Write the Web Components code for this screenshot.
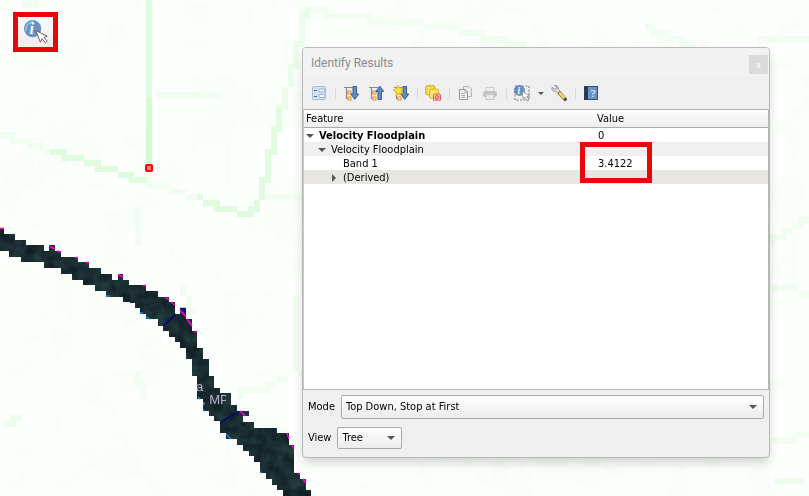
<!DOCTYPE html>
<html lang="en">
<head>
<meta charset="utf-8">
<title>Identify Results</title>
<style>
html,body{height:100%;margin:0}
body{font:11px/14px "DejaVu Sans Condensed","Noto Sans",sans-serif;color:#000;overflow:hidden}
</style>
</head>
<body>
<map-desktop>
  <flood-map slot="map"></flood-map>
  <identify-tool slot="tool"></identify-tool>
  <identify-panel slot="panel" heading="Identify Results">
    <panel-toolbar slot="toolbar"></panel-toolbar>
    <result-tree></result-tree>
    <choice-field slot="options" label="Mode" options="Top Down, Stop at First|Current Layer|Top Down|Layer Selection" wide></choice-field>
    <choice-field slot="options" label="View" options="Tree|Table|Graph"></choice-field>
  </identify-panel>
</map-desktop>
<script>
const define = (name, html, setup) => customElements.define(name, class extends HTMLElement {
  constructor() {
    super();
    this.attachShadow({mode: 'open'});
  }
  connectedCallback() {
    this.shadowRoot.innerHTML = typeof html === 'function' ? html(this) : html;
    if (setup) setup(this, this.shadowRoot);
  }
});

const tree = `<path d="M1 2.5H10M3.5 2V13.5H7M3.5 7.5H7" fill="none" stroke="#8a8a8a" stroke-width="1.2"/><rect x="5" y="6" width="3" height="3" fill="#fff3d8" stroke="#f08a1c"/><rect x="5" y="12" width="3" height="3" fill="#fff3d8" stroke="#f08a1c"/>`;
const down = `<path d="M10 1.5H13.5V9H15.8L11.8 14.4L7.8 9H10Z" fill="#5f8dc4" stroke="#2f5580" stroke-width=".9"/>`;
const info = `<circle cx="5.5" cy="5.5" r="5" fill="#6590c8" stroke="#4a77b0" stroke-width=".6"/><text x="3.6" y="9" font-family="Liberation Serif,serif" font-weight="bold" font-style="italic" font-size="10" fill="#fff">i</text>`;
const icons = {
  form: `<rect x="1.5" y="1.5" width="13" height="13" rx="1" fill="#d3e2f3" stroke="#a4bcd8"/><path d="M3 5.500H6M3 11.500H6" stroke="#4d6c93"/><rect x="8" y="4" width="5.500" height="3" rx="1" fill="#fff" stroke="#93add0"/><rect x="8" y="9.500" width="5.500" height="3" rx="1" fill="#fff" stroke="#93add0"/>`,
  expand: tree + down,
  collapse: tree + `<path d="M10 14.4H13.5V6.5H15.8L11.8 1.2L7.8 6.5H10Z" fill="#5f8dc4" stroke="#2f5580" stroke-width=".9"/>`,
  star: tree + down + `<path d="M5 .4L6.6 3.2L9.9 3L8 5.8L9.5 8.9L6.1 8.1L3.4 10.3L3.2 6.9L.3 5.2L3.5 4Z" fill="#ffe63b" stroke="#f0ad13" stroke-width=".9"/>`,
  clear: `<rect x=".8" y=".8" width="9" height="9" rx="1" fill="#f4df56" stroke="#c7aa22"/><rect x="4.5" y="4.2" width="9" height="9" rx="1" fill="#fae45d" stroke="#d3b72c"/><rect x="8.5" y="9" width="7" height="7" rx="1.2" fill="#f5c8c8" stroke="#e05a5a"/><circle cx="12" cy="12.5" r="2" fill="none" stroke="#d93636" stroke-width=".8"/><path d="M10.500 14L13.500 11" stroke="#d93636" stroke-width=".8"/>`,
  copy: `<path d="M6.500 1.500H12L14.500 4V11.500H6.500Z" fill="#ededed" stroke="#b4b4b4"/><path d="M2.500 4.500H8L10.500 7V14.500H2.500Z" fill="#ededed" stroke="#999"/><path d="M8 4.500V7H10.500M4.500 8.500H8M4.500 10.500H8M4.500 12.500H8" fill="none" stroke="#999" stroke-width=".8"/>`,
  print: `<rect x="4" y="2.500" width="8" height="4" fill="#eee" stroke="#cdcdcd"/><rect x="1" y="6" width="14" height="6" rx="2" fill="#c3c3c3"/><rect x="4" y="9.500" width="8" height="5" fill="#eaeaea" stroke="#c6c6c6"/>`,
  select: `<rect x="1" y="1" width="14" height="14" fill="none" stroke="#808080" stroke-width="1.2" stroke-dasharray="2 1.500"/>${info}<path d="M8 6L9.200 14L11 12.300L13.100 15.700L14.800 14.500L12.900 11.600L15.300 11Z" fill="#fff" stroke="#777" stroke-width=".7"/>`,
  wrench: `<path d="M1.2 2.2L3.5 4.4L5.4 3.8L5.5 1.6L3.4 .5C6 0 7.8 1.7 7.3 4.3L10 7.5L8 9L5 6.3C2.6 7 .3 5 1.2 2.2Z" fill="#e9e9e9" stroke="#858585" stroke-width=".9"/><path d="M8.8 8.3L14 14" stroke="#8b7732" stroke-width="4" stroke-linecap="round"/><path d="M9 8.4L13.7 13.5" stroke="#f3d76b" stroke-width="2.6" stroke-linecap="round"/><circle cx="14.2" cy="14.2" r="1.5" fill="#4d4a3c"/>`,
  help: `<rect x="1.500" y="1.500" width="13" height="13" fill="#6892c8" stroke="#35506f"/><rect x="1" y="1" width="4" height="14" fill="#293c4e"/><text x="7.500" y="12" font-family="Liberation Serif,serif" font-size="11" fill="#fff">?</text>`
};

define('tool-icon', el => `<style>:host{display:block;width:16px;height:16px}svg{display:block}</style><svg width="16" height="16" viewBox="0 0 16 16" aria-hidden="true">${icons[el.getAttribute('name')]}</svg>`);

define('map-desktop', `<style>
:host{display:block;position:relative;height:100%;min-height:400px;overflow:hidden;background:#fdfffc}
::slotted([slot=map]){position:absolute;inset:0}
::slotted([slot=tool]){position:absolute;left:13px;top:12px}
::slotted([slot=panel]){position:absolute;left:302px;right:39px;top:47px;bottom:38px}
</style><slot name="map"></slot><slot name="tool"></slot><slot name="panel"></slot>`);

define('identify-tool', `<style>
:host{display:block}
button{display:grid;place-items:center;width:45px;height:40px;padding:0;border:5px solid #ea0707;background:linear-gradient(#fafafa,#ededed)}
svg{display:block}
</style><button aria-label="Identify features"><svg width="24" height="24" viewBox="0 0 24 24" aria-hidden="true">
<circle cx="8.6" cy="8.6" r="8.2" fill="#6893c9" stroke="#507eb8" stroke-width=".7"/><path d="M1.8 11C1.6 5 5 2 10 2" fill="none" stroke="#a7c2e2" stroke-width="1.3"/>
<text x="5.6" y="14" font-family="Liberation Serif,serif" font-weight="bold" font-style="italic" font-size="16" fill="#fff">i</text>
<path d="M11.700 10.500L16.400 22.200L18.200 18.700L21.200 22.800L23.200 21.200L20 17.400L23.200 16.200Z" fill="#fff" stroke="#555" stroke-width=".9"/></svg></button>`);

/* Raster cells of the velocity layer, drawn as stepped lines over faint noise. */
const cell = 17 / 3, ox = 146 - 26 * cell, oy = 285 - 51 * cell;
const roads = [
  [3, [[149,0],[149,100]]], [4, [[149,100],[149,162]]],
  [1, [[0,133],[50,151]]], [3, [[50,151],[80,159],[105,168],[142,180]]], [1, [[142,180],[180,192],[200,199]]],
  [3, [[200,199],[225,208],[245,214],[258,205],[263,190],[269,160],[280,112]]], [2, [[280,112],[290,80],[299,45],[306,8]]],
  [1, [[262,196],[300,196]]], [1, [[160,93],[215,95]]], [0, [[228,110],[229,180]]], [1, [[137,210],[136,240]]],
  [1, [[25,5],[40,0]]], [1, [[300,10],[380,20],[440,26],[520,44]]], [1, [[650,28],[690,46]]], [1, [[760,36],[809,40]]],
  [1, [[770,240],[790,230],[809,218]]], [1, [[770,285],[809,293]]], [2, [[780,482],[800,482]]], [1, [[770,440],[809,437]]],
  [1, [[238,393],[264,390],[284,376]]], [2, [[8,425],[20,416]]], [0, [[60,488],[100,455],[120,435]]], [1, [[298,300],[299,370]]],
  [1, [[135,375],[145,395]]], [0, [[228,440],[228,480]]], [1, [[180,285],[192,310]]], [0, [[65,190],[105,187],[115,197]]]
];
const noise = (x, y) => { const n = Math.sin(x * 12.99 + y * 78.23) * 43758.55; return n - Math.floor(n); };
const smooth = (x, y) => {
  const i = Math.floor(x), j = Math.floor(y), u = x - i, v = y - j;
  return (noise(i,j) * (1-u) + noise(i+1,j) * u) * (1-v) + (noise(i,j+1) * (1-u) + noise(i+1,j+1) * u) * v;
};
function velocityCells() {
  const level = ['', '', '', '', ''];
  const put = (k, i, j) => { level[k] += `M${Math.round(ox + i*cell)} ${Math.round(oy + j*cell)}h6v6h-6z`; };
  for (let j = 0; j < 90; j++) for (let i = 0; i < 145; i++) {
    const s = smooth(i / 5, j / 5) * .6 + smooth(i / 2 + 40, j / 2) * .4;
    if (s > .62) put(0, i, j);
  }
  for (const [k, pts] of roads) {
    const seen = new Set();
    for (let p = 1; p < pts.length; p++) {
      const [a, b] = pts[p-1], [c, d] = pts[p], n = Math.ceil(Math.hypot(c-a, d-b) / 2);
      for (let t = 0; t <= n; t++) {
        const i = Math.floor((a + (c-a)*t/n - ox) / cell), j = Math.floor((b + (d-b)*t/n - oy) / cell);
        if (!seen.has(i + ',' + j)) { seen.add(i + ',' + j); put(k, i, j); }
      }
    }
  }
  return level.map((d, k) => `<path d="${d}" fill="${['#f9fff8','#f2fdf1','#eafdea','#e0fbe0','#d4fad4'][k]}"/>`).join('');
}
define('flood-map', () => `<style>:host{display:block;overflow:hidden}svg{display:block}</style>
<svg width="100%" height="100%" role="img" aria-label="Velocity floodplain map">
<defs>
<filter id="water" x="0" y="0" width="100%" height="100%" color-interpolation-filters="sRGB"><feTurbulence type="fractalNoise" baseFrequency=".09" numOctaves="3" seed="6"/><feColorMatrix values=".12 0 0 0 .04  .2 0 0 0 .075  .15 0 0 0 .115  0 0 0 0 1"/><feComposite in2="SourceGraphic" operator="in"/></filter>
<clipPath id="mp"><rect x="197" y="380" width="29" height="30"/></clipPath>
</defs>
<g shape-rendering="crispEdges">${velocityCells()}</g>
<g fill="#1c3036" shape-rendering="crispEdges" filter="url(#water)">
<path transform="translate(0 220) scale(.333333)" d="M0 24H12V42H45V60H78V75H132V93H147V75H165V93H183V111H234V127H267V144H303V162H336V180H354V162H369V180H387V195H438V213H474V231H480V315H474V297H438V282H420V264H405V246H369V231H318V213H285V195H249V180H216V162H183V144H132V126H63V110H27V93H0Z"/>
<path transform="translate(140 270) scale(.333333)" d="M-30 45H18V63H54V81H87V96H105V132H120V114H138V147H156V183H171V234H189V267H207V318H222V360H171V318H156V267H138V234H120V216H105V201H87V183H69V168H54V147H18V132H0V100H-30Z"/>
<path transform="translate(140 370) scale(.333333)" d="M171 0H207V18H222V54H240V69H273V105H291V123H327V138H309V156H342V174H411V189H447V225H462V309H480V327H498V360H513V390H429V360H411V345H396V327H378V309H360V276H342V258H327V243H309V225H291V207H258V189H240V153H222V138H207V123H189V87H171Z"/>
</g>
<g fill="none" stroke="#ff00dc" stroke-width="1.5"><path d="M0 228.500H4M49 246L55 249M57 251L61 252M75 257.500H78M86 262.500H89M118 274.500L123 277M143 285.500H146M165 297L169 300M171 302L175 305M180 310L186 317M187 319L192 326M194 331.500H197M240 411L245 416M287 433L289 439M292 445L294 449M298 473L300 475M303 479L306 483"/></g>
<path d="M106 296H110M140 313H143M146 317L150 319M198 397L200 399M203 410L205 411M226 434L231 439M260 472L262 473" fill="none" stroke="#1688f5" stroke-width="1.600"/>
<path d="M163 326L176 314M180 308.500H185V313M220 423L239 411" fill="none" stroke="#00008c" stroke-width="1.400"/>
<g font-family="Liberation Sans,sans-serif" font-size="13" fill="#b5adc9" clip-path="url(#mp)"><text x="196" y="391">a</text><text x="202" y="404">, MP</text></g>
<rect x="146" y="165" width="6" height="6" rx="1" fill="#ff7a66" stroke="#fa0010" stroke-width="2"/>
</svg>`);

define('identify-panel', el => `<style>
:host{display:flex;flex-direction:column;box-sizing:border-box;border:1px solid #b9b9b9;border-radius:4px;background:#efefef;box-shadow:0 6px 12px -2px #0003;overflow:hidden}
header{display:flex;align-items:center;justify-content:space-between;height:29px;padding:0 1px 0 8px;background:#f2f2f2}
h1{margin:0;font:12px/16px Roboto,"Open Sans",sans-serif;color:#8b8b8b}
header button{align-self:flex-end;width:19px;height:19px;margin-bottom:3px;padding:0;border:0;background:#dadada;color:#f6f6f6;font:bold 9px/16px "Liberation Sans",sans-serif}
main{flex:1;min-height:0;display:flex;flex-direction:column;border:1px solid #b4b4b4;border-left-color:#c4c4c4;background:#fff}
footer{display:flex;flex-direction:column;align-items:stretch;gap:8px;padding:5px 5px 8px}
</style><header><h1>${el.getAttribute('heading')}</h1><button aria-label="Close">x</button></header>
<slot name="toolbar"></slot><main><slot></slot></main><footer><slot name="options"></slot></footer>`);

define('panel-toolbar', () => {
  const b = (n, l) => `<button aria-label="${l}"><tool-icon name="${n}"></tool-icon></button>`, s = '<i></i>';
  return `<style>
:host{display:flex;align-items:center;gap:1px;height:32px;padding-left:4px}
button{display:grid;place-items:center;flex:none;width:24px;height:24px;padding:0;border:0;background:none}
i{flex:none;width:6px;height:11px;background:linear-gradient(#d9d9d9,#d9d9d9) center/1px 100% no-repeat}
.more{width:11px}.more::before{content:"";border:3px solid transparent;border-top-color:#555;border-bottom:0}
</style>${b('form','Feature form')}${s}${b('expand','Expand tree')}${b('collapse','Collapse tree')}${b('star','Expand new results')}${s}${b('clear','Clear results')}${s}${b('copy','Copy feature')}${b('print','Print response')}${s}${b('select','Identify by area')}<button class="more" aria-label="Identify modes"></button>${b('wrench','Settings')}${s}${b('help','Help')}`;
});

define('annotation-box', `<style>:host{display:block;box-sizing:border-box;border:5px solid #ea0707;pointer-events:none}</style>`);

define('result-tree', `<style>
:host{display:block}
table{width:100%;border-collapse:separate;border-spacing:0;table-layout:fixed}
th{box-sizing:border-box;height:18px;padding:1px 3px 0;text-align:left;font-weight:400;line-height:16px;background:linear-gradient(#fdfdfd,#eee);border-bottom:1px solid #aaa}
th:first-child{width:62.5%;padding-left:2px}
td{box-sizing:border-box;height:14px;padding:1px 0 0;line-height:13px;position:relative}
td:last-child{padding-left:4px}
.row{display:flex;align-items:center;height:13px;padding-left:calc(var(--depth)*12px + 2px);white-space:nowrap}
button{display:grid;place-items:center;width:8px;height:10px;margin-right:5px;padding:0;border:0;background:none}
button::before{content:"";border:4px solid transparent;border-top-color:#555;border-bottom:0}
button.closed::before{border:4px solid transparent;border-left-color:#555;border-right:0}
.leaf{padding-left:calc(var(--depth)*12px + 15px)}
.alt{background:#efefef}.derived{background:#e7e6e2}
.top{font-weight:700}
annotation-box{position:absolute;z-index:1;left:-14px;top:-14px;width:72px;height:41px}
</style><table><thead><tr><th>Feature</th><th>Value</th></tr></thead><tbody>
<tr><td><div class="row top" style="--depth:0"><button aria-label="Collapse layer"></button>Velocity Floodplain</div></td><td>0</td></tr>
<tr class="alt"><td><div class="row" style="--depth:1"><button aria-label="Collapse feature"></button>Velocity Floodplain</div></td><td></td></tr>
<tr><td><div class="row leaf" style="--depth:2">Band 1</div></td><td>3.4122<annotation-box></annotation-box></td></tr>
<tr class="derived"><td><div class="row" style="--depth:2"><button class="closed" aria-label="Expand derived"></button>(Derived)</div></td><td></td></tr>
</tbody></table>`);

define('choice-field', el => `<style>
:host{display:flex;align-items:center;gap:6px}
.box{position:relative;display:flex;width:65px}
:host([wide]) .box{flex:1;width:auto}
select{appearance:none;width:100%;height:22px;padding:0 20px 0 4px;border:1px solid #aaa;border-radius:2px;background:linear-gradient(#fff,#ececec);font:inherit;color:inherit}
:host([wide]) select{height:24px}
.box::after{content:"";position:absolute;right:7px;top:50%;margin-top:-2px;border:4px solid transparent;border-top-color:#555;border-bottom:0;pointer-events:none}
</style><label for="choice">${el.getAttribute('label')}</label><span class="box"><select id="choice">${el.getAttribute('options').split('|').map(o => `<option>${o}</option>`).join('')}</select></span>`);
</script>
</body>
</html>
